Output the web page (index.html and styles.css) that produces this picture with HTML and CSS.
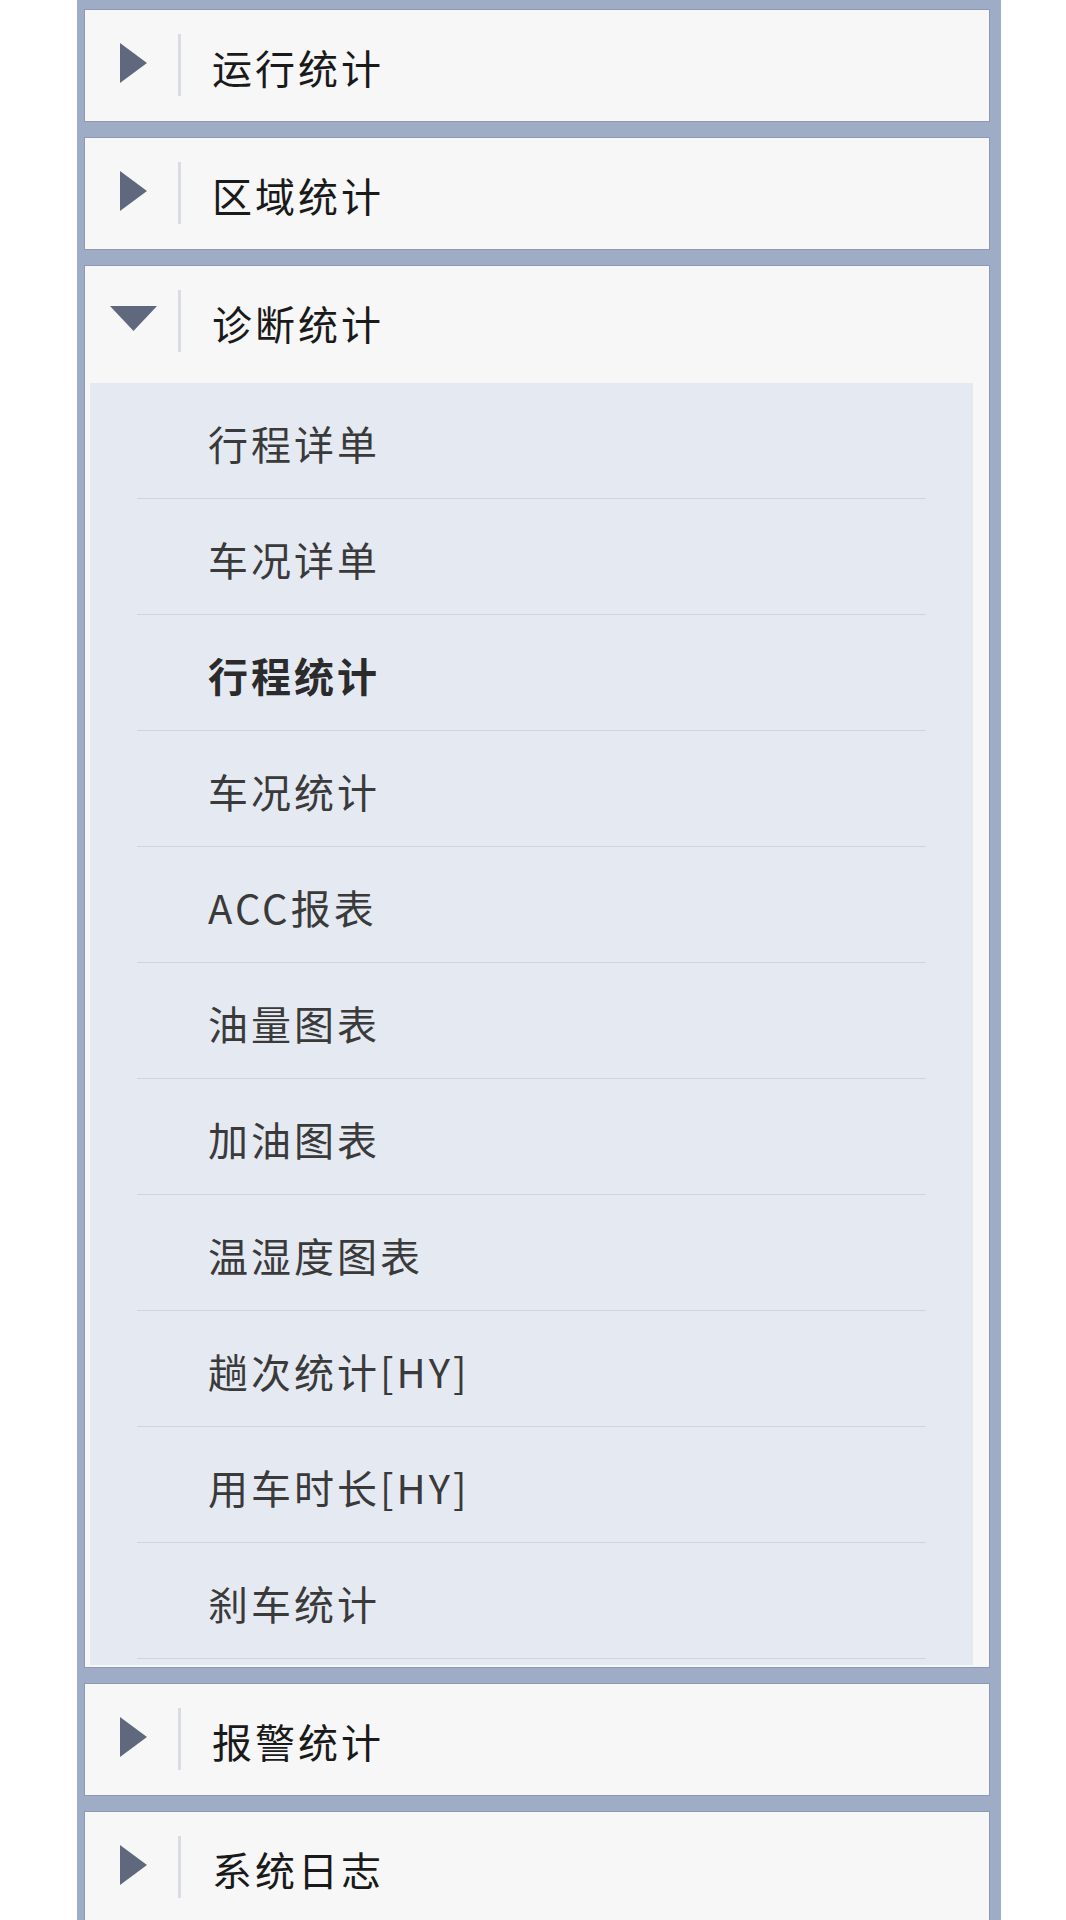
FILE: index.html
```html
<!DOCTYPE html>
<html lang="zh-CN">
<head>
<meta charset="utf-8">
<title>统计菜单</title>
<link rel="stylesheet" href="styles.css">
</head>
<body>
<div class="panel">
  <div class="card">
    <div class="head">
      <svg class="arrow-r" viewBox="0 0 27 40"><polygon points="0,0 27,20 0,40"/></svg>
      <span class="sep"></span>
      <span class="title">运行统计</span>
    </div>
  </div>
  <div class="card">
    <div class="head">
      <svg class="arrow-r" viewBox="0 0 27 40"><polygon points="0,0 27,20 0,40"/></svg>
      <span class="sep"></span>
      <span class="title">区域统计</span>
    </div>
  </div>
  <div class="card open">
    <div class="head">
      <svg class="arrow-d" viewBox="0 0 47 25"><polygon points="0,0 47,0 23.5,25"/></svg>
      <span class="sep"></span>
      <span class="title">诊断统计</span>
    </div>
    <ul class="sub">
      <li class="item"><span>行程详单</span></li>
      <li class="item"><span>车况详单</span></li>
      <li class="item active"><span>行程统计</span></li>
      <li class="item"><span>车况统计</span></li>
      <li class="item"><span>ACC报表</span></li>
      <li class="item"><span>油量图表</span></li>
      <li class="item"><span>加油图表</span></li>
      <li class="item"><span>温湿度图表</span></li>
      <li class="item"><span>趟次统计[HY]</span></li>
      <li class="item"><span>用车时长[HY]</span></li>
      <li class="item"><span>刹车统计</span></li>
    </ul>
  </div>
  <div class="card">
    <div class="head">
      <svg class="arrow-r" viewBox="0 0 27 40"><polygon points="0,0 27,20 0,40"/></svg>
      <span class="sep"></span>
      <span class="title">报警统计</span>
    </div>
  </div>
  <div class="card">
    <div class="head">
      <svg class="arrow-r" viewBox="0 0 27 40"><polygon points="0,0 27,20 0,40"/></svg>
      <span class="sep"></span>
      <span class="title">系统日志</span>
    </div>
  </div>
</div>
</body>
</html>
```

FILE: styles.css
```css
html, body {
  margin: 0;
  padding: 0;
  background: #ffffff;
}
body {
  font-family: "Noto Sans CJK SC", "Noto Sans", sans-serif;
  height: 1920px;
  overflow: hidden;
}
.panel {
  margin-left: 77px;
  width: 924px;
  box-sizing: border-box;
  background: #9facc6;
  padding: 10px 12px 0 8px;
  display: flex;
  flex-direction: column;
  gap: 17px;
  min-height: 1920px;
}
.card {
  background: #f7f7f8;
  box-shadow: 0 0 0 1px #8d98b2;
}
.head {
  height: 111px;
  display: flex;
  align-items: center;
  position: relative;
}
.arrow-r {
  width: 27px;
  height: 40px;
  margin-left: 35px;
  margin-top: -5px;
  fill: #5f687d;
}
.arrow-d {
  width: 47px;
  height: 25px;
  margin-left: 25px;
  margin-top: -7px;
  fill: #5f687d;
}
.sep {
  width: 3px;
  height: 62px;
  background: #d9dce2;
  margin-left: 31px;
  margin-top: -2px;
}
.arrow-d + .sep {
  margin-left: 21px;
}
.title {
  margin-left: 31px;
  font-size: 40px;
  letter-spacing: 3px;
  color: #1a1a1a;
  line-height: 1;
  margin-top: 2px;
}
.sub {
  list-style: none;
  margin: 6px 16px 2px 5px;
  padding: 0 0 6px 0;
  background: #e5e9f1;
}
.item {
  height: 115px;
  margin: 0 47px;
  border-bottom: 1px solid #cfd4dd;
  display: flex;
  align-items: center;
  box-sizing: content-box;
}
.item span {
  padding-left: 71px;
  padding-top: 4px;
  font-size: 40px;
  letter-spacing: 3px;
  color: #3a3a3a;
  line-height: 1;
}
.item.active span {
  font-weight: bold;
  color: #2b2b2b;
}
```
